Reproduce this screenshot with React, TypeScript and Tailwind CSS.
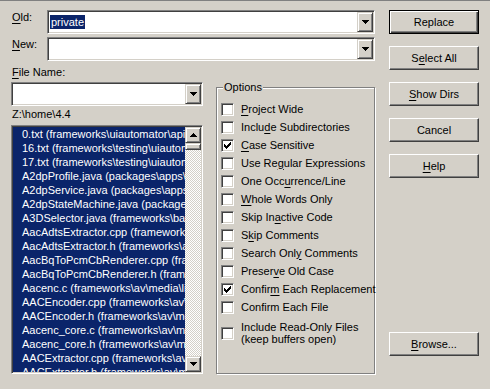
import React from 'react';

const sunken =
  'border border-t-[#808080] border-l-[#808080] border-b-white border-r-white shadow-[inset_1px_1px_0_#404040,inset_-1px_-1px_0_#d4d0c8]';
const raised =
  'bg-[#d4d0c8] border border-t-white border-l-white border-b-[#404040] border-r-[#404040] shadow-[inset_-1px_-1px_0_#808080]';
const raisedSmall =
  'bg-[#d4d0c8] border border-t-[#d4d0c8] border-l-[#d4d0c8] border-b-[#404040] border-r-[#404040] shadow-[inset_1px_1px_0_#ffffff,inset_-1px_-1px_0_#808080]';

const files = [
  '0.txt (frameworks\\uiautomator\\api)',
  '16.txt (frameworks\\testing\\uiautomator\\api)',
  '17.txt (frameworks\\testing\\uiautomator\\api)',
  'A2dpProfile.java (packages\\apps\\Settings\\src)',
  'A2dpService.java (packages\\apps\\Bluetooth\\src)',
  'A2dpStateMachine.java (packages\\apps\\Bluetooth)',
  'A3DSelector.java (frameworks\\base\\tests)',
  'AacAdtsExtractor.cpp (frameworks\\av\\media)',
  'AacAdtsExtractor.h (frameworks\\av\\media)',
  'AacBqToPcmCbRenderer.cpp (frameworks\\wilhelm)',
  'AacBqToPcmCbRenderer.h (frameworks\\wilhelm)',
  'Aacenc.c (frameworks\\av\\media\\libstagefright)',
  'AACEncoder.cpp (frameworks\\av\\media)',
  'AACEncoder.h (frameworks\\av\\media)',
  'Aacenc_core.c (frameworks\\av\\media)',
  'Aacenc_core.h (frameworks\\av\\media)',
  'AACExtractor.cpp (frameworks\\av\\media)',
  'AACExtractor.h (frameworks\\av\\media)',
];

// label, underlined index (-1 = none), checked
const options: [string, number, boolean][] = [
  ['Project Wide', 0, false],
  ['Include Subdirectories', 5, false],
  ['Case Sensitive', 0, true],
  ['Use Regular Expressions', 6, false],
  ['One Occurrence/Line', 7, false],
  ['Whole Words Only', 0, false],
  ['Skip Inactive Code', 7, false],
  ['Skip Comments', 1, false],
  ['Search Only Comments', 10, false],
  ['Preserve Old Case', 6, false],
  ['Confirm Each Replacement', 6, true],
  ['Confirm Each File', -1, false],
];

function Mn({ text, at }: { text: string; at: number }) {
  if (at < 0) return <>{text}</>;
  return (
    <>
      {text.slice(0, at)}
      <span className="underline underline-offset-[2px] decoration-1">{text[at]}</span>
      {text.slice(at + 1)}
    </>
  );
}

function Arrow({ up }: { up?: boolean }) {
  return (
    <svg width="7" height="4" viewBox="0 0 7 4" shapeRendering="crispEdges" className={up ? 'rotate-180' : ''}>
      <path d="M0 0h7v1H0zM1 1h5v1H1zM2 2h3v1H2zM3 3h1v1H3z" fill="#000" />
    </svg>
  );
}

function Combo({ className, children }: { className?: string; children?: React.ReactNode }) {
  return (
    <div className={`flex h-[24px] bg-white p-px ${sunken} ${className ?? ''}`}>
      <div className="flex-1 flex items-center pl-px overflow-hidden">{children}</div>
      <div className={`w-[16px] h-full flex items-center justify-center ${raisedSmall}`}>
        <Arrow />
      </div>
    </div>
  );
}

function Check({ checked }: { checked?: boolean }) {
  return (
    <div className={`w-[13px] h-[13px] shrink-0 bg-white flex items-center justify-center ${sunken}`}>
      {checked && (
        <svg width="7" height="7" viewBox="0 0 7 7" shapeRendering="crispEdges">
          <path
            d="M6 0h1v1H6zM5 1h2v1H5zM0 2h1v1H0zM4 2h3v1H4zM0 3h2v1H0zM3 3h3v1H3zM0 4h5v1H0zM1 5h3v1H1zM2 6h1v1H2z"
            fill="#000"
          />
        </svg>
      )}
    </div>
  );
}

function Btn({ label, at = -1, isDefault, className }: { label: string; at?: number; isDefault?: boolean; className?: string }) {
  const look = isDefault
    ? 'bg-[#d4d0c8] border border-black shadow-[inset_1px_1px_0_#ffffff,inset_-1px_-1px_0_#404040,inset_-2px_-2px_0_#808080]'
    : raised;
  return (
    <div className={`h-[24px] flex items-center justify-center ${look} ${className ?? ''}`}>
      <span className="leading-[13px]">
        <Mn text={label} at={at} />
      </span>
    </div>
  );
}

export default function App() {
  return (
    <div className="w-[490px] h-[389px] bg-[#d4d0c8] border-t border-[#808080] overflow-hidden font-['Liberation_Sans',Arial,sans-serif] text-[11px] leading-[13px] text-black select-none">
      <div className="flex pt-[9px] pl-[11px] gap-[13px]">
        {/* left side */}
        <div className="w-[365px] flex flex-col">
          <div className="flex">
            <div className="w-[36px] pl-px pt-px">
              <Mn text="Old:" at={0} />
            </div>
            <Combo className="w-[328px]">
              <span className="bg-[#0a246a] text-white px-px leading-[14px]">private</span>
            </Combo>
          </div>
          <div className="flex mt-[3px]">
            <div className="w-[36px] pl-px pt-px">
              <Mn text="New:" at={0} />
            </div>
            <Combo className="w-[328px]" />
          </div>

          <div className="flex mt-[5px] gap-[13px]">
            {/* file column */}
            <div className="w-[192px] flex flex-col">
              <div className="pl-px">
                <Mn text="File Name:" at={0} />
              </div>
              <Combo className="mt-[3px]" />
              <div className="mt-[2px] pl-px">{'Z:\\home\\4.4'}</div>
              <div className={`mt-[4px] h-[249px] p-px flex bg-[#0a246a] ${sunken}`}>
                <div className="flex-1 overflow-hidden">
                  {files.map((f) => (
                    <div key={f} className="h-[14px] leading-[14px] pl-[9px] whitespace-nowrap text-white">
                      {f}
                    </div>
                  ))}
                </div>
                <div className="w-[16px] flex flex-col bg-[repeating-conic-gradient(#ffffff_0%_25%,#d4d0c8_0%_50%)] bg-[length:2px_2px]">
                  <div className={`h-[16px] flex items-center justify-center ${raisedSmall}`}>
                    <Arrow up />
                  </div>
                  <div className={`h-[7px] ${raisedSmall}`} />
                  <div className="flex-1" />
                  <div className={`h-[16px] flex items-center justify-center ${raisedSmall}`}>
                    <Arrow />
                  </div>
                </div>
              </div>
            </div>

            {/* options group */}
            <div className="relative mt-[21px] w-[159px] h-[287px] border border-[#808080] shadow-[inset_1px_1px_0_#ffffff,1px_1px_0_#ffffff] pt-[12px] pl-[4px]">
              <div className="absolute left-[6px] top-[-7px] bg-[#d4d0c8] px-px">Options</div>
              {options.map(([label, at, checked]) => (
                <div key={label} className="h-[18px] flex items-center">
                  <Check checked={checked} />
                  <span className="ml-[7px] whitespace-nowrap">
                    <Mn text={label} at={at} />
                  </span>
                </div>
              ))}
              <div className="mt-[5px] flex items-center">
                <Check />
                <div className="ml-[7px] leading-[12px]">
                  <div>Include Read-Only Files</div>
                  <div>(keep buffers open)</div>
                </div>
              </div>
            </div>
          </div>
        </div>

        {/* right buttons */}
        <div className="w-[90px] flex flex-col">
          <Btn label="Replace" isDefault />
          <Btn label="Select All" at={1} className="mt-[12px]" />
          <Btn label="Show Dirs" at={0} className="mt-[12px]" />
          <Btn label="Cancel" className="mt-[12px]" />
          <Btn label="Help" at={0} className="mt-[12px]" />
          <Btn label="Browse..." at={0} className="mt-[154px]" />
        </div>
      </div>
    </div>
  );
}
